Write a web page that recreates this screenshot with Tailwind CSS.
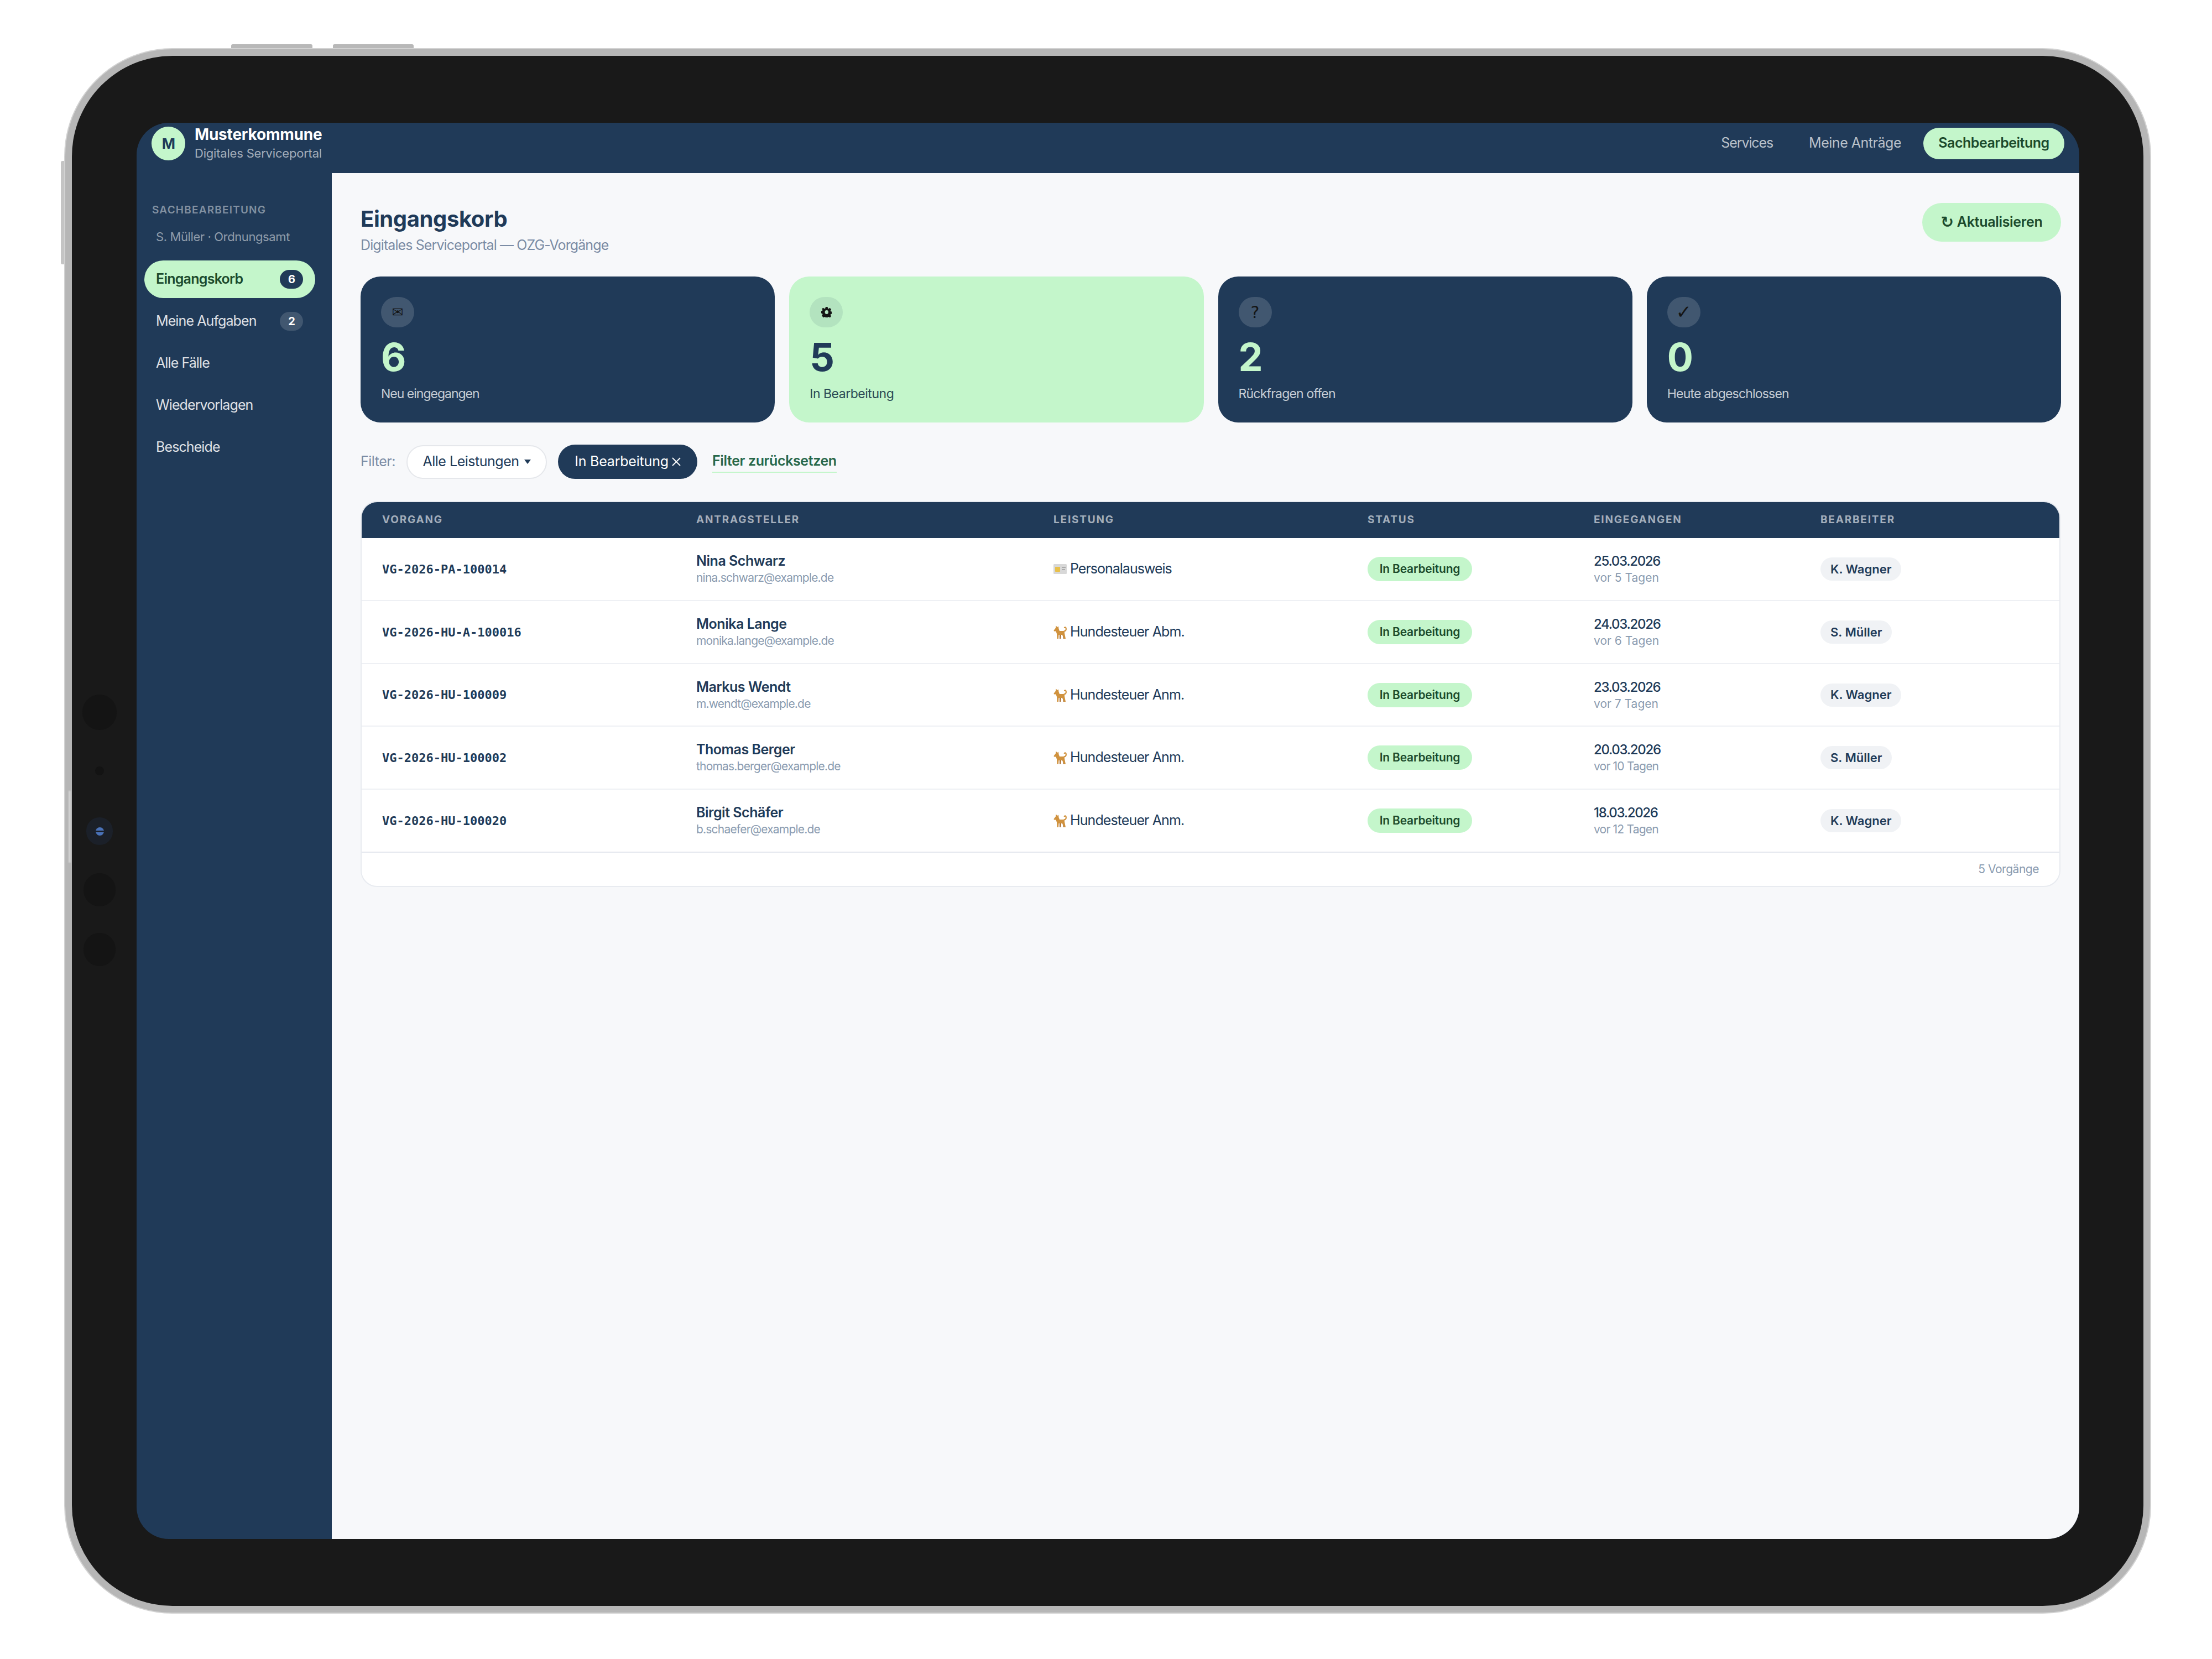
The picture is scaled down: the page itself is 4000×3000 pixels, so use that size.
<!DOCTYPE html>
<html lang="de">
<head>
  <meta charset="UTF-8" />
  <title>Eingangskorb</title>
  <script src="https://cdn.jsdelivr.net/npm/@tailwindcss/browser@4"></script>
</head>
<body class="bg-white font-['Inter',sans-serif] tracking-[-0.03em] text-[#203a58]">
<svg class="hidden">
  <symbol id="dog" viewBox="0 0 24 24">
    <path d="M11 15h3l-1 9h-2zM16 15h2l2 9h-2z" fill="#a86a2a"/>
    <path d="M0.5 9 L4 4.5 L4.5 0.5 L7 3 L9 1.5 L9.5 6 L11 10 L18 10 L20 9 L20 14 L22 24 L19.5 24 L16 17 L9.5 17 L9 24 L6.5 24 L6 15 L4.5 10.5 L1 10.5 Z" fill="#d0923e"/>
    <path d="M19 10.5c3 0 4.500-3 3.500-6-.7-1.800-2.800-1.300-2.800.5" fill="none" stroke="#d0923e" stroke-width="2.200"/>
  </symbol>
</svg>
<div class="relative w-[4000px] h-[3000px] pt-[87px] pl-[116px]">

  <!-- hardware buttons -->
  <div class="absolute left-[418px] top-[80px] w-[147px] h-[8px] rounded-t-[3px] bg-[#b8b8b8]"></div>
  <div class="absolute left-[602px] top-[80px] w-[146px] h-[8px] rounded-t-[3px] bg-[#b8b8b8]"></div>
  <div class="absolute left-[110px] top-[291px] w-[8px] h-[187px] rounded-l-[3px] bg-[#c4c4c4]"></div>

  <!-- device frame -->
  <div class="relative w-[3774px] h-[2831px] rounded-[196px] bg-[#b6b6b6] border-2 border-[#d2d2d2] p-[12px]">
    <div class="absolute left-[6px] top-[1341px] w-[4px] h-[130px] bg-white/40 blur-[1px]"></div>
    <div class="relative w-full h-full rounded-[182px] bg-[#191919] pt-[121px] pb-[121px] pl-[117px] pr-[116px]">

      <!-- cameras in the bezel -->
      <div class="absolute left-[19px] top-[1155px] w-[62px] h-[64px] rounded-full bg-[#141414]"></div>
      <div class="absolute left-[42px] top-[1285px] w-[16px] h-[16px] rounded-full bg-[#131313]"></div>
      <div class="absolute left-[26px] top-[1377px] w-[48px] h-[50px] rounded-full bg-[#1b2029] flex items-center justify-center">
        <div class="w-[15px] h-[15px] rounded-full bg-[#4a72b8] flex items-center"><div class="w-full h-[3px] bg-[#1b2029]"></div></div>
      </div>
      <div class="absolute left-[21px] top-[1478px] w-[58px] h-[60px] rounded-full bg-[#141414]"></div>
      <div class="absolute left-[21px] top-[1586px] w-[58px] h-[60px] rounded-full bg-[#141414]"></div>

      <!-- screen -->
      <div class="w-full h-full rounded-[58px] overflow-hidden flex flex-col bg-[#203a58]">

        <header class="h-[91px] shrink-0 flex items-center justify-between px-[27px] pb-[17px]">
          <div class="flex items-center gap-[17px]">
            <div class="w-[61px] h-[61px] rounded-full bg-[#c4f6cb] flex items-center justify-center text-[26px] font-bold text-[#203a58]">M</div>
            <div class="flex flex-col">
              <span class="text-[28px] leading-[32px] font-bold tracking-[-0.2px] text-white">Musterkommune</span>
              <span class="mt-[3px] text-[22px] leading-[30px] tracking-[-0.2px] text-white/60">Digitales Serviceportal</span>
            </div>
          </div>
          <nav class="flex items-center gap-[13px] text-[25px]">
            <a class="pl-[27px] pr-[25px] tracking-[-1.100px] text-white/70">Services</a>
            <a class="px-[27px] text-white/70">Meine Anträge</a>
            <a class="h-[57px] w-[255px] flex items-center justify-center rounded-full bg-[#c4f6cb] font-semibold tracking-[-0.5px] text-[#1c4a2c]">Sachbearbeitung</a>
          </nav>
        </header>

        <div class="flex-1 flex min-h-0">
          <aside class="w-[353px] shrink-0 pt-[56px] pl-[14px] pr-[30px]">
            <div class="pl-[14px] h-[22px] leading-[22px] text-[19px] font-semibold tracking-[1.2px] text-white/45">SACHBEARBEITUNG</div>
            <div class="pl-[21px] mt-[22px] h-[30px] leading-[30px] text-[22px] tracking-[-0.4px] text-white/50">S. Müller · Ordnungsamt</div>
            <ul class="mt-[28px] flex flex-col gap-[8px] text-[25px] tracking-[-0.9px] text-white/85">
              <li class="h-[68px] rounded-full bg-[#c4f6cb] flex items-center justify-between pl-[21px] pr-[22px] font-semibold tracking-[-0.75px] text-[#1c4a2c]">
                Eingangskorb
                <span class="w-[42px] h-[34px] rounded-full bg-[#203a58] flex items-center justify-center text-[20px] font-bold text-white">6</span>
              </li>
              <li class="h-[68px] rounded-full flex items-center justify-between pl-[21px] pr-[22px]">
                Meine Aufgaben
                <span class="w-[42px] h-[34px] rounded-full bg-white/15 flex items-center justify-center text-[20px] font-bold text-white">2</span>
              </li>
              <li class="h-[68px] flex items-center pl-[21px]">Alle Fälle</li>
              <li class="h-[68px] flex items-center pl-[21px]">Wiedervorlagen</li>
              <li class="h-[68px] flex items-center pl-[21px]">Bescheide</li>
            </ul>
          </aside>

          <main class="flex-1 bg-[#f7f8fa] pt-[54px] pl-[52px] pr-[33px]">
            <div class="flex items-start justify-between">
              <div class="pt-[2px]">
                <h1 class="text-[40px] leading-[54px] font-bold tracking-[-0.4px] text-[#203a58]">Eingangskorb</h1>
                <p class="mt-[3px] text-[25px] leading-[34px] tracking-[-0.9px] text-[#7b8ca5]">Digitales Serviceportal — OZG-Vorgänge</p>
              </div>
              <button class="h-[70px] w-[251px] rounded-full bg-[#c4f6cb] flex items-center justify-center gap-[6px] text-[25px] font-semibold tracking-[-0.3px] text-[#1c4a2c]">
                <span class="font-['DejaVu_Sans',sans-serif] text-[28px]">↻</span>Aktualisieren
              </button>
            </div>

            <section class="mt-[40px] grid grid-cols-4 gap-[26px]">
              <div class="h-[264px] rounded-[36px] bg-[#203a58] p-[37px] flex flex-col">
                <div class="w-[60px] h-[62px] rounded-full bg-white/15 flex items-center justify-center font-['DejaVu_Sans',sans-serif] text-[25px] tracking-normal text-[#151515]">✉</div>
                <div class="mt-[18px] text-[70px] leading-[72px] font-bold text-[#c4f6cb]">6</div>
                <div class="mt-[15px] text-[23px] leading-[30px] tracking-[-1px] text-white/75">Neu eingegangen</div>
              </div>
              <div class="h-[264px] rounded-[36px] bg-[#c4f6cb] p-[37px] flex flex-col">
                <div class="w-[60px] h-[62px] rounded-full bg-[#203a58]/10 flex items-center justify-center">
                  <svg class="w-[19px] h-[19px]" viewBox="0 0 24 24" fill="#151515"><path fill-rule="evenodd" d="M9.500 0h5l.7 3.500 2 .8 3-2 3.500 3.500-2 3 .8 2 3.500.7v5l-3.500.7-.8 2 2 3-3.500 3.500-3-2-2 .8-.7 3.500h-5l-.7-3.500-2-.8-3 2L-.2 20.700l2-3-.8-2L-2.500 15v-5l3.500-.7.8-2-2-3L3.300 2.300l3 2 2-.8zM12 8a4.500 4.500 0 1 0 0 9 4.500 4.500 0 0 0 0-9z" transform="translate(1.600 0) scale(.9 .96)"/></svg>
                </div>
                <div class="mt-[18px] text-[70px] leading-[72px] font-bold text-[#203a58]">5</div>
                <div class="mt-[15px] text-[23px] leading-[30px] text-[#2b4a55]">In Bearbeitung</div>
              </div>
              <div class="h-[264px] rounded-[36px] bg-[#203a58] p-[37px] flex flex-col">
                <div class="w-[60px] h-[62px] rounded-full bg-white/15 flex items-center justify-center font-['DejaVu_Sans',sans-serif] text-[30px] tracking-normal text-[#151515]">?</div>
                <div class="mt-[18px] text-[70px] leading-[72px] font-bold text-[#c4f6cb]">2</div>
                <div class="mt-[15px] text-[23px] leading-[30px] tracking-[-0.8px] text-white/75">Rückfragen offen</div>
              </div>
              <div class="h-[264px] rounded-[36px] bg-[#203a58] p-[37px] flex flex-col">
                <div class="w-[60px] h-[62px] rounded-full bg-white/15 flex items-center justify-center font-['DejaVu_Sans',sans-serif] text-[34px] tracking-normal text-[#151515]">✓</div>
                <div class="mt-[18px] text-[70px] leading-[72px] font-bold text-[#c4f6cb]">0</div>
                <div class="mt-[15px] text-[23px] leading-[30px] tracking-[-0.8px] text-white/75">Heute abgeschlossen</div>
              </div>
            </section>

            <div class="mt-[40px] h-[62px] flex items-center text-[25px]">
              <span class="w-[83px] text-[#7b8ca5]">Filter:</span>
              <span class="h-[61px] w-[254px] rounded-full bg-white border-2 border-[#e5e7eb] flex items-center justify-center gap-[9px] text-[#203a58]">Alle Leistungen
                <svg class="w-[12px] h-[8px]" viewBox="0 0 12 8"><path d="M0 0h12L6 8z" fill="#203a58"/></svg></span>
              <span class="ml-[20px] h-[62px] w-[252px] rounded-full bg-[#203a58] flex items-center justify-center gap-[6px] tracking-[-0.2px] text-white">In Bearbeitung
                <svg class="w-[16px] h-[16px]" viewBox="0 0 16 16"><path d="M1 1l14 14M15 1L1 15" stroke="#fff" stroke-width="1.800"/></svg></span>
              <span class="ml-[27px] border-b-2 border-[#c4f6cb] font-semibold tracking-[-0.4px] text-[#276749]">Filter zurücksetzen</span>
            </div>

            <div class="mt-[40px] w-[3074px] rounded-[30px] overflow-hidden bg-white border-2 border-[#e8ebf0]">
              <table class="w-full table-fixed border-collapse">
                <colgroup>
                  <col class="w-[568px]" /><col class="w-[646px]" /><col class="w-[568px]" /><col class="w-[409px]" /><col class="w-[410px]" /><col />
                </colgroup>
                <thead class="bg-[#203a58] text-[19px] tracking-[1.800px] text-white/60">
                  <tr class="h-[65px] text-left">
                    <th class="pl-[37px] font-bold">VORGANG</th>
                    <th class="pl-[37px] font-bold">ANTRAGSTELLER</th>
                    <th class="pl-[37px] font-bold">LEISTUNG</th>
                    <th class="pl-[37px] font-bold">STATUS</th>
                    <th class="pl-[37px] font-bold">EINGEGANGEN</th>
                    <th class="pl-[37px] font-bold">BEARBEITER</th>
                  </tr>
                </thead>
                <tbody>
                  <tr class="h-[113px] border-b-2 border-[#eef0f4]">
                    <td class="pl-[37px] font-['DejaVu_Sans_Mono',monospace] font-bold tracking-normal text-[22px]">VG-2026-PA-100014</td>
                    <td class="pl-[37px]"><div class="text-[25px] leading-[32px] font-semibold">Nina Schwarz</div><div class="text-[21px] leading-[30px] tracking-[-0.8px] text-[#8a9bb0]">nina.schwarz@example.de</div></td>
                    <td class="pl-[37px]"><div class="flex items-center gap-[6px] text-[25px] tracking-[-1px]">
                      <svg class="w-[24px] h-[18px]" viewBox="0 0 24 18"><rect width="24" height="18" rx="1.500" fill="#d8d8d8"/><rect x="3" y="5" width="9" height="9" rx="1" fill="#e8c04a"/><path d="M15 6h7M15 10h6" stroke="#9a9a9a" stroke-width="1.600"/></svg>Personalausweis</div></td>
                    <td class="pl-[37px]"><span class="inline-flex h-[44px] w-[189px] items-center justify-center rounded-full bg-[#c4f6cb] text-[21px] font-semibold tracking-[-0.2px] text-[#1c4a2c]">In Bearbeitung</span></td>
                    <td class="pl-[37px]"><div class="text-[24px] leading-[32px] font-medium tracking-[-1.300px]">25.03.2026</div><div class="text-[21px] leading-[28px] tracking-normal text-[#8a9bb0]">vor 5 Tagen</div></td>
                    <td class="pl-[37px]"><span class="inline-flex h-[42px] items-center rounded-full bg-[#f0f2f5] px-[18px] text-[22px] font-semibold tracking-normal">K. Wagner</span></td>
                  </tr>
                  <tr class="h-[114px] border-b-2 border-[#eef0f4]">
                    <td class="pl-[37px] font-['DejaVu_Sans_Mono',monospace] font-bold tracking-normal text-[22px]">VG-2026-HU-A-100016</td>
                    <td class="pl-[37px]"><div class="text-[25px] leading-[32px] font-semibold">Monika Lange</div><div class="text-[21px] leading-[30px] tracking-[-0.8px] text-[#8a9bb0]">monika.lange@example.de</div></td>
                    <td class="pl-[37px]"><div class="flex items-center gap-[6px] text-[25px] tracking-[-0.9px]"><svg class="w-[24px] h-[24px]"><use href="#dog"/></svg>Hundesteuer Abm.</div></td>
                    <td class="pl-[37px]"><span class="inline-flex h-[44px] w-[189px] items-center justify-center rounded-full bg-[#c4f6cb] text-[21px] font-semibold tracking-[-0.2px] text-[#1c4a2c]">In Bearbeitung</span></td>
                    <td class="pl-[37px]"><div class="text-[24px] leading-[32px] font-medium tracking-[-1.300px]">24.03.2026</div><div class="text-[21px] leading-[28px] tracking-normal text-[#8a9bb0]">vor 6 Tagen</div></td>
                    <td class="pl-[37px]"><span class="inline-flex h-[42px] items-center rounded-full bg-[#f0f2f5] px-[18px] text-[22px] font-semibold tracking-normal">S. Müller</span></td>
                  </tr>
                  <tr class="h-[113px] border-b-2 border-[#eef0f4]">
                    <td class="pl-[37px] font-['DejaVu_Sans_Mono',monospace] font-bold tracking-normal text-[22px]">VG-2026-HU-100009</td>
                    <td class="pl-[37px]"><div class="text-[25px] leading-[32px] font-semibold">Markus Wendt</div><div class="text-[21px] leading-[30px] tracking-[-0.8px] text-[#8a9bb0]">m.wendt@example.de</div></td>
                    <td class="pl-[37px]"><div class="flex items-center gap-[6px] text-[25px] tracking-[-0.9px]"><svg class="w-[24px] h-[24px]"><use href="#dog"/></svg>Hundesteuer Anm.</div></td>
                    <td class="pl-[37px]"><span class="inline-flex h-[44px] w-[189px] items-center justify-center rounded-full bg-[#c4f6cb] text-[21px] font-semibold tracking-[-0.2px] text-[#1c4a2c]">In Bearbeitung</span></td>
                    <td class="pl-[37px]"><div class="text-[24px] leading-[32px] font-medium tracking-[-1.300px]">23.03.2026</div><div class="text-[21px] leading-[28px] tracking-normal text-[#8a9bb0]">vor 7 Tagen</div></td>
                    <td class="pl-[37px]"><span class="inline-flex h-[42px] items-center rounded-full bg-[#f0f2f5] px-[18px] text-[22px] font-semibold tracking-normal">K. Wagner</span></td>
                  </tr>
                  <tr class="h-[114px] border-b-2 border-[#eef0f4]">
                    <td class="pl-[37px] font-['DejaVu_Sans_Mono',monospace] font-bold tracking-normal text-[22px]">VG-2026-HU-100002</td>
                    <td class="pl-[37px]"><div class="text-[25px] leading-[32px] font-semibold">Thomas Berger</div><div class="text-[21px] leading-[30px] tracking-[-0.8px] text-[#8a9bb0]">thomas.berger@example.de</div></td>
                    <td class="pl-[37px]"><div class="flex items-center gap-[6px] text-[25px] tracking-[-0.9px]"><svg class="w-[24px] h-[24px]"><use href="#dog"/></svg>Hundesteuer Anm.</div></td>
                    <td class="pl-[37px]"><span class="inline-flex h-[44px] w-[189px] items-center justify-center rounded-full bg-[#c4f6cb] text-[21px] font-semibold tracking-[-0.2px] text-[#1c4a2c]">In Bearbeitung</span></td>
                    <td class="pl-[37px]"><div class="text-[24px] leading-[32px] font-medium tracking-[-1.300px]">20.03.2026</div><div class="text-[21px] leading-[28px] tracking-[-0.8px] text-[#8a9bb0]">vor 10 Tagen</div></td>
                    <td class="pl-[37px]"><span class="inline-flex h-[42px] items-center rounded-full bg-[#f0f2f5] px-[18px] text-[22px] font-semibold tracking-normal">S. Müller</span></td>
                  </tr>
                  <tr class="h-[114px] border-b-2 border-[#e5e8ee]">
                    <td class="pl-[37px] font-['DejaVu_Sans_Mono',monospace] font-bold tracking-normal text-[22px]">VG-2026-HU-100020</td>
                    <td class="pl-[37px]"><div class="text-[25px] leading-[32px] font-semibold">Birgit Schäfer</div><div class="text-[21px] leading-[30px] tracking-[-0.8px] text-[#8a9bb0]">b.schaefer@example.de</div></td>
                    <td class="pl-[37px]"><div class="flex items-center gap-[6px] text-[25px] tracking-[-0.9px]"><svg class="w-[24px] h-[24px]"><use href="#dog"/></svg>Hundesteuer Anm.</div></td>
                    <td class="pl-[37px]"><span class="inline-flex h-[44px] w-[189px] items-center justify-center rounded-full bg-[#c4f6cb] text-[21px] font-semibold tracking-[-0.2px] text-[#1c4a2c]">In Bearbeitung</span></td>
                    <td class="pl-[37px]"><div class="text-[24px] leading-[32px] font-medium tracking-[-1.300px]">18.03.2026</div><div class="text-[21px] leading-[28px] tracking-[-0.8px] text-[#8a9bb0]">vor 12 Tagen</div></td>
                    <td class="pl-[37px]"><span class="inline-flex h-[42px] items-center rounded-full bg-[#f0f2f5] px-[18px] text-[22px] font-semibold tracking-normal">K. Wagner</span></td>
                  </tr>
                </tbody>
              </table>
              <div class="h-[60px] flex items-center justify-end pr-[37px] text-[21px] text-[#8a9bb0]">5 Vorgänge</div>
            </div>
          </main>
        </div>
      </div>
    </div>
  </div>
</div>
</body>
</html>
